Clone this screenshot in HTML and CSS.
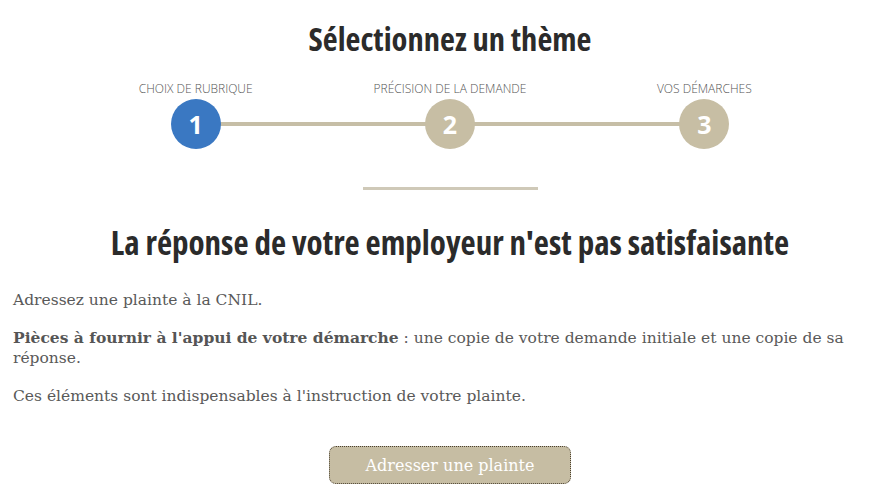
FILE: index.html
```html
<!DOCTYPE html>
<html lang="fr">
<head>
    <meta charset="UTF-8">
    <title>Sélectionnez un thème</title>
    <link rel="stylesheet" href="styles.css">
</head>
<body>
    <div class="page">
        <h1 class="title">Sélectionnez un thème</h1>

        <div class="steps">
            <div class="step active">
                <span class="step-label">Choix de rubrique</span>
                <span class="step-num">1</span>
            </div>
            <div class="step">
                <span class="step-label">Précision de la demande</span>
                <span class="step-num">2</span>
            </div>
            <div class="step">
                <span class="step-label">Vos démarches</span>
                <span class="step-num">3</span>
            </div>
        </div>

        <hr class="sep">

        <h2 class="answer-title">La réponse de votre employeur n'est pas satisfaisante</h2>

        <p>Adressez une plainte à la CNIL.</p>
        <p><strong>Pièces à fournir à l'appui de votre démarche</strong> : une copie de votre demande initiale et une copie de sa réponse.</p>
        <p>Ces éléments sont indispensables à l'instruction de votre plainte.</p>

        <div class="actions">
            <button type="button" class="btn">Adresser une plainte</button>
        </div>
    </div>
</body>
</html>
```

FILE: styles.css
```css
html, body {
    overflow-x: hidden;
}

body {
    margin: 0;
    background: #fff;
    font-family: "DejaVu Serif", Georgia, serif;
    color: #595959;
}

.page {
    width: 874px;
    margin-left: 13px;
    padding-top: 17px;
}

.title,
.answer-title {
    font-family: "Open Sans", sans-serif;
    font-stretch: 75%;
    font-weight: 700;
    color: #2b2b2b;
    text-align: center;
    margin: 0;
}

.title {
    font-size: 32.5px;
    line-height: 44px;
}

/* steps */
.steps {
    display: flex;
    width: 763px;
    margin: 21px auto 0;
    position: relative;
}

.steps::before {
    content: "";
    position: absolute;
    left: 127px;
    right: 127px;
    top: 40px;
    height: 4px;
    background: #c6bea6;
}

.step {
    flex: 1;
    display: flex;
    flex-direction: column;
    align-items: center;
    position: relative;
}

.step-label {
    font-family: "Open Sans", sans-serif;
    font-weight: 300;
    font-size: 12px;
    line-height: 14px;
    text-transform: uppercase;
    color: #555;
    letter-spacing: 0;
}

.step-num {
    width: 50px;
    height: 50px;
    margin-top: 3px;
    border-radius: 50%;
    background: #c7bea4;
    color: #fff;
    font-family: "Open Sans", sans-serif;
    font-weight: 700;
    font-size: 25px;
    line-height: 50px;
    text-align: center;
}

.step.active .step-num {
    background: #3a78c2;
}

.sep {
    width: 175px;
    height: 3px;
    margin: 38px auto 0;
    border: 0;
    background: #cfc9b8;
}

.answer-title {
    font-size: 33px;
    line-height: 44px;
    margin-top: 31px;
    margin-bottom: 25px;
}

p {
    font-size: 15.5px;
    line-height: 20px;
    margin: 0 0 18px;
}

strong {
    color: #555;
}

.actions {
    display: flex;
    justify-content: center;
    padding-top: 22px;
}

.btn {
    width: 242px;
    height: 38px;
    background: #c6bda3;
    border: 1px dotted #4a4030;
    border-radius: 7px;
    color: #fff;
    font-family: "DejaVu Serif", Georgia, serif;
    font-size: 16px;
    cursor: pointer;
}
```
